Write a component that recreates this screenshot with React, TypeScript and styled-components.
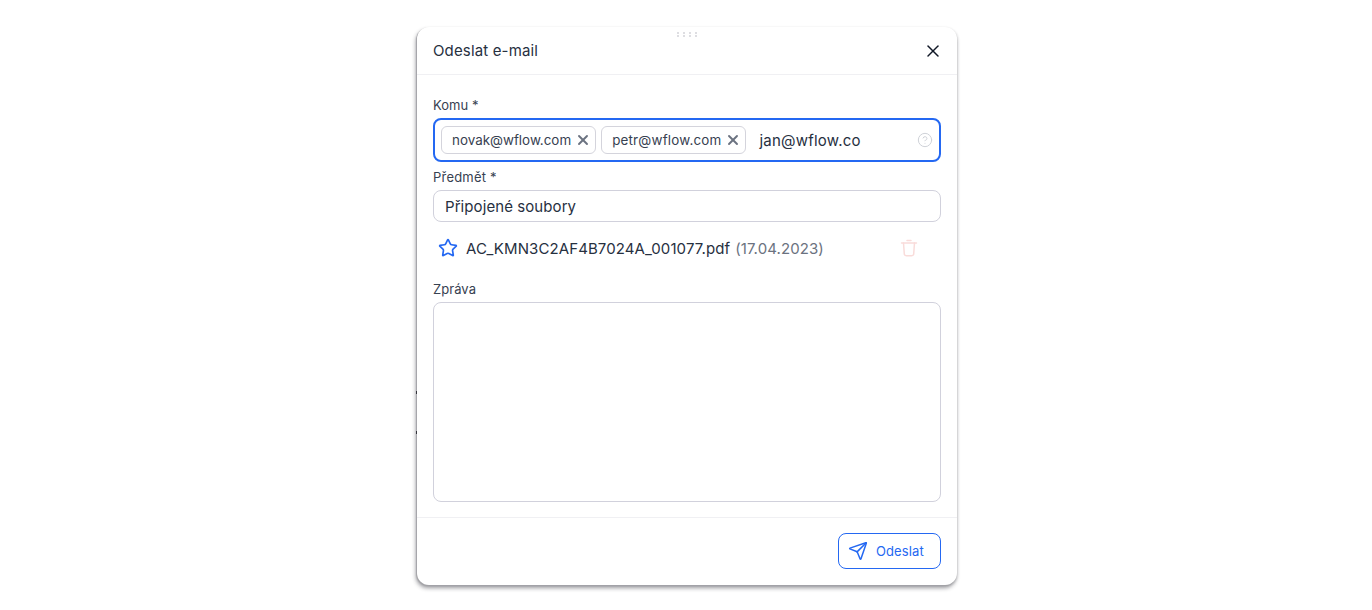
import React from "react";
import styled, { createGlobalStyle } from "styled-components";
import { CircleHelp, Send, Star, X } from "lucide-react";

const GlobalStyle = createGlobalStyle`
  html, body {
    margin: 0;
    padding: 0;
    background: #fff;
    font-family: Inter, "Noto Sans", sans-serif;
    color: #1f2937;
  }
`;

const Page = styled.div`
  width: 1372px;
  height: 610px;
  display: flex;
  justify-content: center;
  padding-top: 27px;
  padding-left: 2px;
  box-sizing: border-box;
  overflow: hidden;
`;

const Modal = styled.div`
  position: relative;
  width: 540px;
  height: 558px;
  box-sizing: border-box;
  display: flex;
  flex-direction: column;
  background: #fff;
  border-radius: 12px;
  box-shadow: -1px 1px 1px #a4a4a8, -1px 3px 4px rgba(30, 30, 40, 0.45), 1px 1px 2px rgba(30, 30, 40, 0.1);

  /* bits of the page behind the dialog that peek out on the left */
  &::before,
  &::after {
    content: "";
    position: absolute;
    left: -1px;
    width: 1px;
    height: 3px;
    background: #33333a;
  }
  &::before {
    top: 364px;
  }
  &::after {
    top: 404px;
  }
`;

const DragHandle = styled.div`
  position: absolute;
  top: 5px;
  left: 260px;
  display: grid;
  grid-template-columns: repeat(4, 2px);
  grid-auto-rows: 2px;
  gap: 1px 4px;

  span {
    background: #dedee2;
  }
`;

const Header = styled.div`
  height: 48px;
  flex-shrink: 0;
  box-sizing: border-box;
  display: flex;
  align-items: center;
  justify-content: space-between;
  padding: 0 14px 0 16px;
  border-bottom: 1px solid #f0f0f3;
  font-size: 15px;
  letter-spacing: 0.15px;
  color: #27303f;
`;

const Body = styled.div`
  flex: 1;
  display: flex;
  flex-direction: column;
  padding: 22px 16px 0;
`;

const Label = styled.div<{ $top?: number; $tracking?: number }>`
  font-size: 13px;
  line-height: 16px;
  letter-spacing: ${(p) => p.$tracking ?? 0.05}px;
  color: #374151;
  margin-top: ${(p) => p.$top ?? 0}px;
  margin-bottom: 5px;
`;

const TagInput = styled.div`
  height: 44px;
  box-sizing: border-box;
  border: 2px solid #2468f2;
  border-radius: 8px;
  display: flex;
  align-items: center;
  padding: 0 6px;
  gap: 5px;
`;

const Tag = styled.div<{ $tracking?: number }>`
  height: 28px;
  box-sizing: border-box;
  display: flex;
  align-items: center;
  gap: 4px;
  padding: 0 4px 0 10px;
  border: 1px solid #d4d4dc;
  border-radius: 6px;
  font-size: 13.4px;
  letter-spacing: ${(p) => p.$tracking ?? 0}px;
  color: #374151;
  svg {
    color: #6b7280;
  }
`;

const TypedValue = styled.div`
  flex: 1;
  margin-left: 8px;
  font-size: 15px;
  letter-spacing: 0.22px;
  color: #27303f;
`;

const HelpIcon = styled(CircleHelp)`
  color: #cfd2d8;
`;

const TextInput = styled.div`
  height: 32px;
  box-sizing: border-box;
  border: 1px solid #d1d1dc;
  border-radius: 8px;
  display: flex;
  align-items: center;
  padding: 0 11px;
  font-size: 15px;
  letter-spacing: 0.08px;
  color: #27303f;
`;

const Attachment = styled.div`
  height: 52px;
  display: flex;
  align-items: center;
  padding-left: 5px;
  font-size: 15px;
  letter-spacing: 0.1px;
  color: #27303f;
`;

const StarIcon = styled(Star)`
  color: #2468f2;
  margin-right: 8px;
`;

const FileDate = styled.span`
  margin-left: 5px;
  color: #6b7280;
`;

const TrashIcon = styled.svg`
  margin-left: auto;
  margin-right: 22px;
  color: #f9dcda;
`;

const TextArea = styled.div`
  height: 200px;
  box-sizing: border-box;
  border: 1px solid #d1d1dc;
  border-radius: 8px;
`;

const Footer = styled.div`
  height: 68px;
  flex-shrink: 0;
  box-sizing: border-box;
  border-top: 1px solid #f0f0f3;
  display: flex;
  justify-content: flex-end;
  align-items: flex-start;
  padding: 15px 16px 0;
`;

const SendButton = styled.div`
  width: 103px;
  height: 36px;
  box-sizing: border-box;
  display: flex;
  align-items: center;
  gap: 8px;
  padding-left: 9px;
  border: 1px solid #2468f2;
  border-radius: 8px;
  font-size: 13px;
  letter-spacing: 0.1px;
  color: #2468f2;
`;

function App() {
  return (
    <>
      <GlobalStyle />
      <Page>
        <Modal>
          <DragHandle>
            {Array.from({ length: 8 }).map((_, i) => (
              <span key={i} />
            ))}
          </DragHandle>
          <Header>
            Odeslat e-mail
            <X size={20} color="#111827" strokeWidth={1.8} />
          </Header>
          <Body>
            <Label>Komu *</Label>
            <TagInput>
              <Tag>
                novak@wflow.com
                <X size={16} strokeWidth={2.8} />
              </Tag>
              <Tag $tracking={0.2}>
                petr@wflow.com
                <X size={16} strokeWidth={2.8} />
              </Tag>
              <TypedValue>jan@wflow.co</TypedValue>
              <HelpIcon size={16} strokeWidth={1.5} />
            </TagInput>
            <Label $top={7} $tracking={0.2}>Předmět *</Label>
            <TextInput>Připojené soubory</TextInput>
            <Attachment>
              <StarIcon size={20} strokeWidth={2} />
              AC_KMN3C2AF4B7024A_001077.pdf
              <FileDate>(17.04.2023)</FileDate>
              <TrashIcon width="20" height="20" viewBox="0 0 20 20" fill="none" stroke="currentColor" strokeWidth="1.5" strokeLinecap="round" strokeLinejoin="round">
                <path d="M2.5 5h15" />
                <path d="M8 2.5h4" />
                <path d="M4.5 5l.8 11a2 2 0 0 0 2 1.8h5.4a2 2 0 0 0 2-1.8l.8-11" />
              </TrashIcon>
            </Attachment>
            <Label $top={7}>Zpráva</Label>
            <TextArea />
          </Body>
          <Footer>
            <SendButton>
              <Send size={20} strokeWidth={1.8} />
              Odeslat
            </SendButton>
          </Footer>
        </Modal>
      </Page>
    </>
  );
}

export default App;
